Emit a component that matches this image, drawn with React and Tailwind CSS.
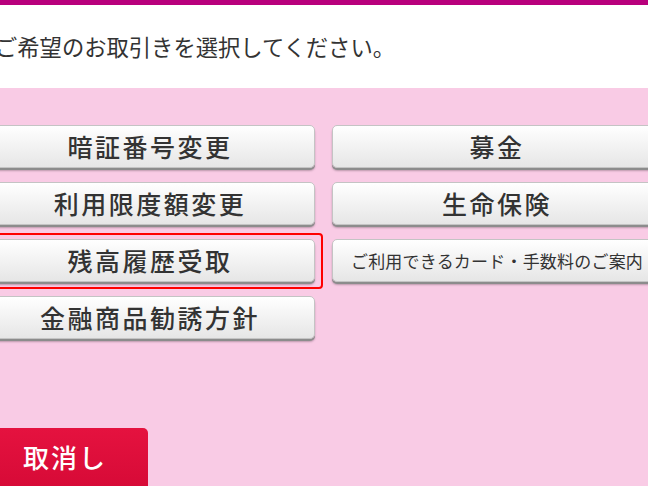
const left = ['暗証番号変更', '利用限度額変更', '残高履歴受取', '金融商品勧誘方針'];
const right = ['募金', '生命保険', 'ご利用できるカード・手数料のご案内'];

function MenuButton({ label, small, selected }) {
    return (
        <div className="relative">
            {selected && (
                <div className="absolute -top-[6px] -bottom-[7px] -left-[8px] -right-[8px] border-[2.5px] border-[#ff0000] rounded-[4px]"></div>
            )}
            <button
                className={`relative w-full h-[43px] rounded-[5px] border border-[#c4c4c4] bg-gradient-to-b from-white to-[#e6e6e6] shadow-[0_2px_0_#8c8c8c,0_3px_2px_rgba(0,0,0,0.25)] text-[#333] flex items-center justify-center ${small ? 'text-[17px] tracking-[0.2px]' : 'text-[25px] tracking-[2.5px] font-medium'}`}
            >
                {label}
            </button>
        </div>
    );
}

export default function App() {
    return (
        <div
            className="w-[648px] h-[486px] overflow-hidden flex flex-col bg-[#f9cbe5]"
            style={{ fontFamily: '"Noto Sans CJK JP", "Noto Sans", sans-serif' }}
        >
            {/* Top bar */}
            <div className="h-[5px] bg-[#b8007c]"></div>

            {/* Prompt */}
            <div className="h-[83px] bg-white flex items-center">
                <p className="-ml-[5px] text-[22.3px] text-[#333] whitespace-nowrap">ご希望のお取引きを選択してください。</p>
            </div>

            {/* Menu buttons */}
            <div className="flex gap-[17px] -ml-[15px] pt-[37px]">
                <div className="w-[330px] shrink-0 flex flex-col gap-[14px]">
                    {left.map((l) => (
                        <MenuButton key={l} label={l} selected={l === '残高履歴受取'} />
                    ))}
                </div>
                <div className="w-[330px] shrink-0 flex flex-col gap-[14px]">
                    {right.map((l) => (
                        <MenuButton key={l} label={l} small={l.length > 8} />
                    ))}
                </div>
            </div>

            {/* Cancel */}
            <div className="mt-auto -ml-[18px]">
                <button className="w-[166px] h-[58px] rounded-t-[5px] bg-gradient-to-b from-[#e5123f] to-[#d70a37] shadow-[0_2px_0_#9a0a2a] text-white text-[26px] font-medium tracking-[2px] flex items-center justify-center pb-[2px]">
                    取消し
                </button>
            </div>
        </div>
    );
}
